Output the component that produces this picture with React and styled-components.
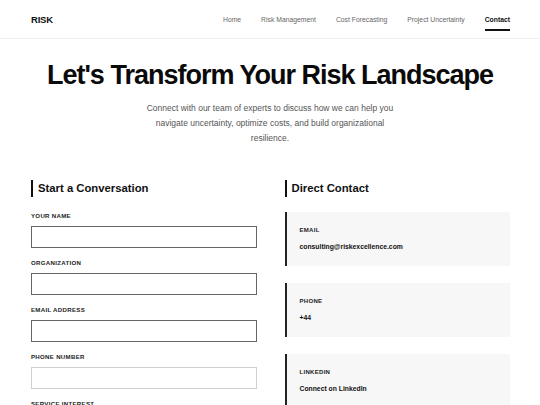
import React from 'react'
import styled, { createGlobalStyle } from 'styled-components'

const GlobalStyle = createGlobalStyle`
    * { box-sizing: border-box; }
    body {
        margin: 0;
        background: #fff;
        font-family: "Liberation Sans", Arial, sans-serif;
        color: #111;
    }
`

const Header = styled.header`
    height: 39px;
    padding: 0 30px 0 31px;
    display: flex;
    align-items: center;
    justify-content: space-between;
    border-bottom: 1px solid #f0f0f0;
`

const Logo = styled.div`
    font-size: 9.5px;
    font-weight: 700;
    letter-spacing: -0.2px;
    color: #111;
`

const Nav = styled.nav`
    display: flex;
    gap: 20px;
    align-items: center;
    height: 100%;
`

const NavLink = styled.a`
    position: relative;
    font-size: 6.8px;
    color: ${p => (p.$active ? '#111' : '#666')};
    font-weight: ${p => (p.$active ? 700 : 400)};
    text-decoration: none;
    padding: 4px 0;

    &::after {
        content: '';
        display: ${p => (p.$active ? 'block' : 'none')};
        position: absolute;
        left: 0;
        right: 0;
        bottom: -4px;
        height: 1.5px;
        background: #111;
    }
`

const Hero = styled.section`
    text-align: center;
    padding: 20px 31px 0;
`

const Title = styled.h1`
    margin: 0;
    font-size: 27px;
    line-height: 32.5px;
    font-weight: 700;
    letter-spacing: -1px;
    color: #0a0a0a;
`

const Lead = styled.p`
    margin: 9px auto 0;
    max-width: 255px;
    font-size: 8.5px;
    line-height: 15px;
    color: #555;
`

const Columns = styled.div`
    display: grid;
    grid-template-columns: 1fr 1fr;
    gap: 28px;
    padding: 34.5px 30px 0 31px;
`

const SectionTitle = styled.h2`
    margin: 0 0 15px;
    padding-left: 5px;
    border-left: 2px solid #111;
    font-size: 11.3px;
    line-height: 17px;
    font-weight: 700;
`

const Field = styled.div`
    margin-bottom: 11px;
`

const Label = styled.label`
    display: block;
    font-size: 6.1px;
    line-height: 8px;
    font-weight: 700;
    letter-spacing: 0.3px;
    text-transform: uppercase;
    color: #222;
    margin-bottom: 6px;
`

const Input = styled.input`
    display: block;
    width: 100%;
    height: 22px;
    border: 1px solid ${p => (p.$light ? '#d0d0d0' : '#666')};
    background: #fff;
    outline: none;
    padding: 0 6px;
    font: inherit;
`

const Card = styled.div`
    background: #f7f7f7;
    border-left: 2px solid #222;
    padding: 14px 13px;
    height: 54px;
    margin-bottom: 17px;
`

const CardLabel = styled.div`
    font-size: 6px;
    line-height: 8px;
    font-weight: 700;
    letter-spacing: 0.3px;
    text-transform: uppercase;
    color: #222;
    margin-bottom: 8px;
`

const CardValue = styled.div`
    font-size: 6.8px;
    line-height: 10px;
    font-weight: 700;
    color: #111;
`

const navItems = ['Home', 'Risk Management', 'Cost Forecasting', 'Project Uncertainty', 'Contact']

const fields = [
    { label: 'Your Name' },
    { label: 'Organization' },
    { label: 'Email Address' },
    { label: 'Phone Number', light: true },
    { label: 'Service Interest', light: true },
]

const contacts = [
    { label: 'Email', value: 'consulting@riskexcellence.com' },
    { label: 'Phone', value: '+44' },
    { label: 'LinkedIn', value: 'Connect on LinkedIn' },
]

export default function App() {
    return (
        <>
            <GlobalStyle />
            <Header>
                <Logo>RISK</Logo>
                <Nav>
                    {navItems.map(item => (
                        <NavLink key={item} href="#" $active={item === 'Contact'}>
                            {item}
                        </NavLink>
                    ))}
                </Nav>
            </Header>
            <Hero>
                <Title>Let's Transform Your Risk Landscape</Title>
                <Lead>
                    Connect with our team of experts to discuss how we can help you
                    navigate uncertainty, optimize costs, and build organizational
                    resilience.
                </Lead>
            </Hero>
            <Columns>
                <div>
                    <SectionTitle>Start a Conversation</SectionTitle>
                    {fields.map(f => (
                        <Field key={f.label}>
                            <Label>{f.label}</Label>
                            <Input $light={f.light} />
                        </Field>
                    ))}
                </div>
                <div>
                    <SectionTitle>Direct Contact</SectionTitle>
                    {contacts.map(c => (
                        <Card key={c.label}>
                            <CardLabel>{c.label}</CardLabel>
                            <CardValue>{c.value}</CardValue>
                        </Card>
                    ))}
                </div>
            </Columns>
        </>
    )
}
